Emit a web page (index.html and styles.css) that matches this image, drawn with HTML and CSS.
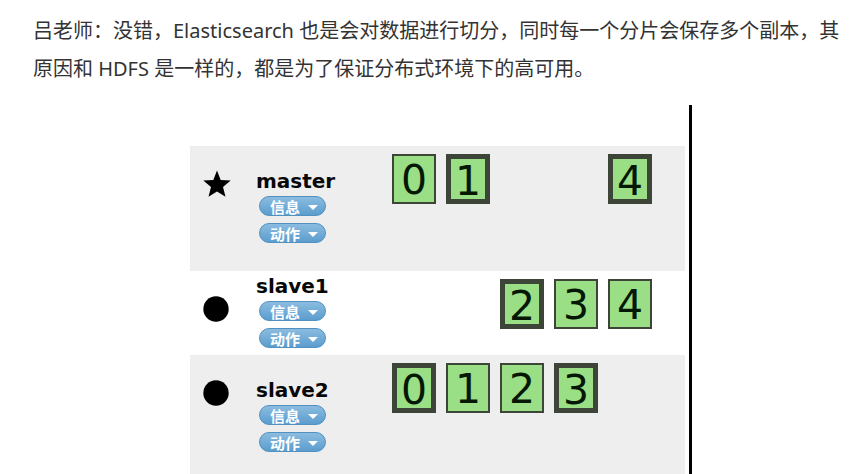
FILE: index.html
```html
<!DOCTYPE html>
<html lang="zh-CN">
<head>
<meta charset="utf-8">
<title>Elasticsearch</title>
<link rel="stylesheet" href="styles.css">
</head>
<body>
<main class="article">
  <p class="text">吕老师：没错，Elasticsearch 也是会对数据进行切分，同时每一个分片会保存多个副本，其原因和 HDFS 是一样的，都是为了保证分布式环境下的高可用。</p>
  <section class="cluster">
    <div class="node shaded">
      <svg class="mark" viewBox="0 0 28 28" aria-hidden="true"><path d="M14 0.5 L17.7 9.9 L27.7 10.5 L20 17 L22.5 26.8 L14 21.4 L5.5 26.8 L8 17 L0.3 10.5 L10.3 9.9 Z"/></svg>
      <div class="info">
        <h2 class="name">master</h2>
        <button class="menu" type="button">信息<span class="caret"></span></button>
        <button class="menu" type="button">动作<span class="caret"></span></button>
      </div>
      <div class="shards">
        <span class="shard">0</span>
        <span class="shard primary">1</span>
        <span class="shard primary last">4</span>
      </div>
    </div>
    <div class="node compact">
      <svg class="mark" viewBox="0 0 28 28" aria-hidden="true"><circle cx="13" cy="14" r="12.7"/></svg>
      <div class="info">
        <h2 class="name">slave1</h2>
        <button class="menu" type="button">信息<span class="caret"></span></button>
        <button class="menu" type="button">动作<span class="caret"></span></button>
      </div>
      <div class="shards">
        <span class="shard primary third">2</span>
        <span class="shard">3</span>
        <span class="shard">4</span>
      </div>
    </div>
    <div class="node shaded">
      <svg class="mark" viewBox="0 0 28 28" aria-hidden="true"><circle cx="13" cy="14" r="12.7"/></svg>
      <div class="info">
        <h2 class="name">slave2</h2>
        <button class="menu" type="button">信息<span class="caret"></span></button>
        <button class="menu" type="button">动作<span class="caret"></span></button>
      </div>
      <div class="shards">
        <span class="shard primary">0</span>
        <span class="shard">1</span>
        <span class="shard">2</span>
        <span class="shard primary">3</span>
      </div>
    </div>
  </section>
</main>
</body>
</html>
```
FILE: styles.css
```css
* { box-sizing: border-box; }

html { overflow: hidden; }

body {
  margin: 0;
  background: #fff;
  color: #333;
}

.article { padding: 12px 8px 0 33px; }

.text {
  margin: 0 0 17px;
  font: 20px/38px "Noto Sans", "Noto Sans CJK SC", sans-serif;
}

.cluster {
  max-width: 502px;
  margin: 0 auto;
  padding: 41px 4px 0 0;
  border-right: 3px solid #000;
}

.node {
  display: grid;
  grid-template-columns: 53px 136px 1fr;
  padding: 0 12px 28px 13px;
}

.shaded { background: #eee; }

.compact { padding-bottom: 7px; }

.mark {
  width: 28px;
  height: 28px;
  margin-top: 24px;
  fill: #000;
}

.info {
  display: flex;
  flex-direction: column;
  align-items: flex-start;
  gap: 7px;
  padding-top: 25px;
}

.compact .info { padding-top: 5px; }

.name {
  margin: 0 0 -2px;
  color: #080808;
  font: bold 20px/20px "DejaVu Sans", sans-serif;
}

.menu {
  display: flex;
  align-items: center;
  gap: 8px;
  width: 67px;
  height: 20px;
  margin-left: 3px;
  padding: 2px 0 0 10px;
  border: 1px solid #5290bd;
  border-radius: 10px;
  background: linear-gradient(#8bbce0, #5b9dce);
  color: #fff;
  font: bold 15px/18px "Noto Sans CJK SC", sans-serif;
}

.caret {
  border: 5px solid transparent;
  border-top-color: #fff;
  border-bottom-width: 0;
}

.shards {
  display: grid;
  grid-template-columns: repeat(5, 44px);
  gap: 10px;
  align-content: start;
  padding-top: 8px;
}

.shard {
  height: 50px;
  border: 2px solid #3d4539;
  background: #9ade85;
  color: #041804;
  font: 41px/48px "DejaVu Sans", sans-serif;
  text-align: center;
}

.primary {
  border-width: 5px;
  line-height: 44px;
}

.third { grid-column: 3; }

.last { grid-column: 5; }
```
